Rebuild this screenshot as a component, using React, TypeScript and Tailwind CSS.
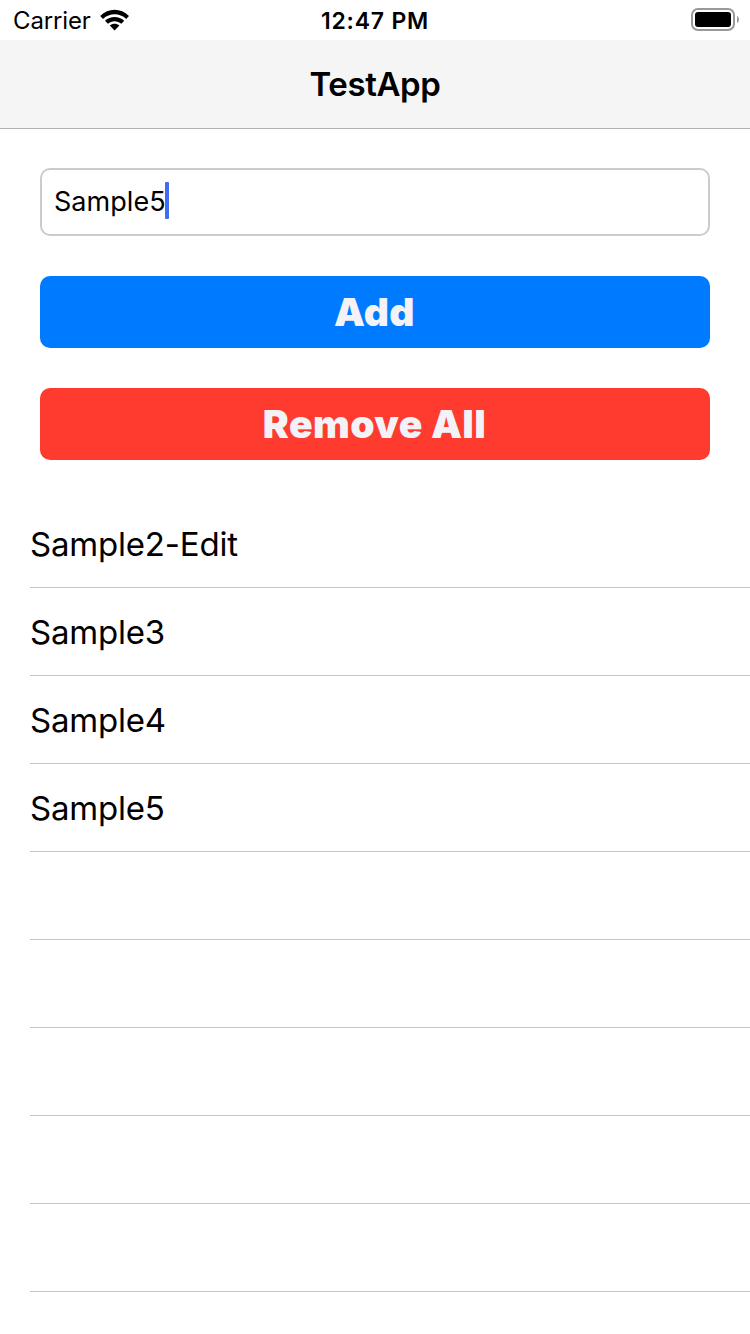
import React, { useState } from "react";

const initialItems = ["Sample2-Edit", "Sample3", "Sample4", "Sample5", "", "", "", "", ""];

const StatusBar = () => (
    <div className="flex h-10 items-center justify-between bg-white">
        <div className="flex w-[240px] items-center gap-[9px] pl-[13px]">
            <span className="pt-0.5 text-[24px] leading-10 tracking-[-0.15px]">Carrier</span>
            <svg width="30" height="22" viewBox="0 0 30 22">
                <path d="M0.2 7C8.4 -1.2 20.8 -1.2 29 7L26.2 9.9C19.6 3.7 9.6 3.7 3 9.9Z" />
                <path d="M5 11.8C10.5 6.8 18.7 6.8 24.2 11.8L21.3 14.7C17.5 11.3 11.7 11.3 7.9 14.7Z" />
                <path d="M9.8 16.6C12.6 14.1 16.6 14.1 19.4 16.6L14.6 21.5Z" />
            </svg>
        </div>
        <span className="pt-0.5 text-[23px] font-semibold leading-10 tracking-[0.8px]">12:47 PM</span>
        <div className="flex w-[240px] justify-end pr-[10px]">
            <svg width="49" height="24" viewBox="0 0 49 24">
                <rect x="1" y="1" width="42" height="21" rx="6" fill="none" stroke="#999999" strokeWidth="2" />
                <rect x="4" y="4" width="36" height="15" rx="3" />
                <path d="M46 8C48.6 9 48.6 14 46 15Z" fill="#999999" />
            </svg>
        </div>
    </div>
);

const App = () => {
    const [items, setItems] = useState(initialItems);

    return (
        <div className="h-[1334px] w-[750px] overflow-hidden bg-white font-['Inter',sans-serif] text-black">
            <StatusBar />
            <div className="flex h-[89px] items-center justify-center border-b border-[#b2b2b2] bg-[#f5f5f5] pt-0.5">
                <h1 className="text-[33px] font-semibold tracking-[-0.4px]">TestApp</h1>
            </div>
            <div className="flex flex-col gap-10 px-10 pt-[39px]">
                <div className="flex h-[68px] items-center rounded-[10px] border-2 border-[#cccccc] pb-[3px] pl-3">
                    <span className="w-[111px] pt-[3px] text-[27px] tracking-[0.05px]">Sample5</span>
                    <span className="h-[37px] w-1 rounded-[1px] bg-[#426bf2]" />
                </div>
                <button className="h-[72px] rounded-[10px] bg-[#007aff] pr-px text-[39px] font-black tracking-[0.4px] text-[#f2f2f7]">
                    Add
                </button>
                <button
                    className="h-[72px] rounded-[10px] bg-[#ff3b30] pr-px text-[39px] font-black tracking-[0.4px] text-[#f2f2f7]"
                    onClick={() => setItems(items.map(() => ""))}
                >
                    Remove All
                </button>
            </div>
            <ul className="mt-10 pl-[30px]">
                {items.map((item, index) => (
                    <li key={index} className="flex h-[88px] items-center border-b border-[#c6c6c8] pt-[3px] text-[33px] tracking-[-0.2px]">
                        {item}
                    </li>
                ))}
            </ul>
        </div>
    );
};

export default App;
